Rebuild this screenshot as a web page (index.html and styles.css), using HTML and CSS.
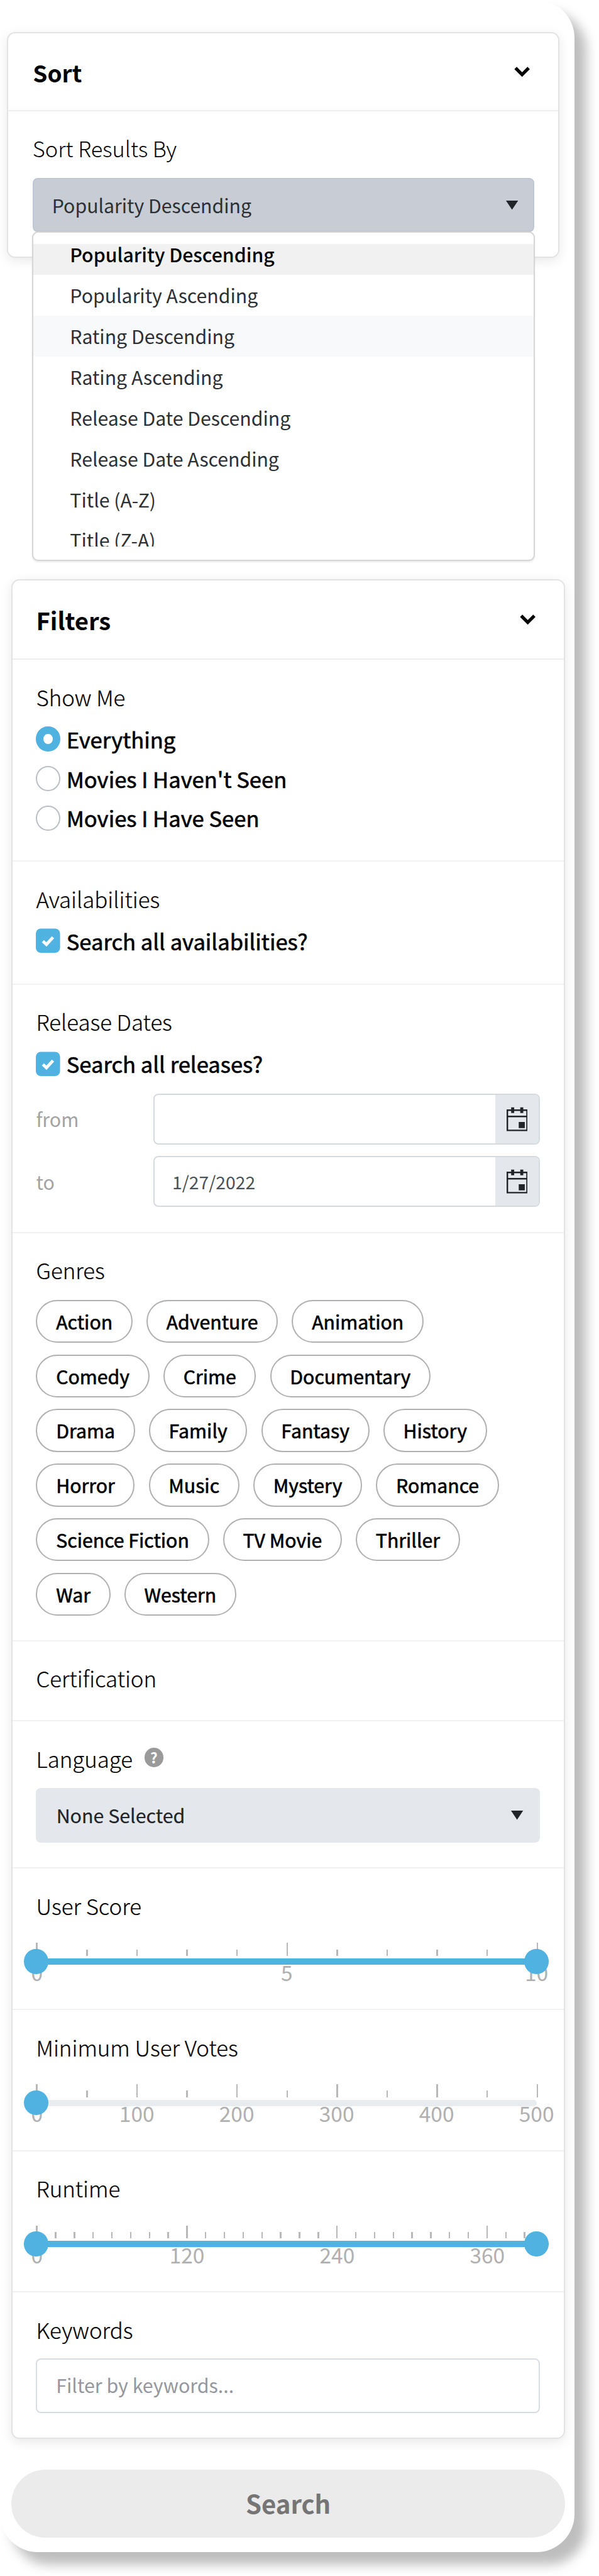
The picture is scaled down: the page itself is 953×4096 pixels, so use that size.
FILE: index.html
```html
<!DOCTYPE html>
<html lang="en">
<head>
<meta charset="utf-8">
<title>Sort and Filters</title>
<link rel="stylesheet" href="styles.css">
</head>
<body>
<main class="panel">
  <section class="card sort-card">
    <header class="card-header">
      <h2 class="sort-title">Sort</h2>
      <svg class="chevron" viewBox="0 0 34 22"><path d="M4 4 L17 17 L30 4"/></svg>
    </header>
    <div class="sort-body">
      <h3>Sort Results By</h3>
      <div class="select select-open">
        <span>Popularity Descending</span>
        <svg class="arrow" viewBox="0 0 24 18"><path d="M0 0H24L12 18Z"/></svg>
        <div class="dropdown">
          <ul class="options">
            <li class="selected">Popularity Descending</li>
            <li>Popularity Ascending</li>
            <li class="hover">Rating Descending</li>
            <li>Rating Ascending</li>
            <li>Release Date Descending</li>
            <li>Release Date Ascending</li>
            <li>Title (A-Z)</li>
            <li>Title (Z-A)</li>
          </ul>
        </div>
      </div>
    </div>
  </section>

  <section class="card filter-card">
    <header class="card-header">
      <h2>Filters</h2>
      <svg class="chevron" viewBox="0 0 34 22"><path d="M4 4 L17 17 L30 4"/></svg>
    </header>

    <div class="group show-me">
      <h3>Show Me</h3>
      <div class="checks">
        <label><i class="radio on"></i>Everything</label>
        <label><i class="radio"></i>Movies I Haven't Seen</label>
        <label><i class="radio"></i>Movies I Have Seen</label>
      </div>
    </div>

    <div class="group availabilities">
      <h3>Availabilities</h3>
      <div class="checks">
        <label><svg class="checkbox" viewBox="0 0 48 48"><rect width="48" height="48" rx="10"/><path d="M14 25 L21 31.500 L34 17.500"/></svg>Search all availabilities?</label>
      </div>
    </div>

    <div class="group releases">
      <h3>Release Dates</h3>
      <div class="checks">
        <label><svg class="checkbox" viewBox="0 0 48 48"><rect width="48" height="48" rx="10"/><path d="M14 25 L21 31.500 L34 17.500"/></svg>Search all releases?</label>
      </div>
      <div class="dates">
        <div class="date-row">
          <span class="date-label">from</span>
          <div class="date-input"><span class="date-value"></span><span class="date-button"><svg class="calendar" viewBox="0 0 42 48"><path class="line" d="M1.500 6.500H40.500V46.500H1.500ZM1.500 19H40.500"/><path d="M9 1H15V12H9ZM27 1H33V12H27ZM24 30H36V42H24Z"/></svg></span></div>
        </div>
        <div class="date-row">
          <span class="date-label">to</span>
          <div class="date-input"><span class="date-value">1/27/2022</span><span class="date-button"><svg class="calendar" viewBox="0 0 42 48"><path class="line" d="M1.500 6.500H40.500V46.500H1.500ZM1.500 19H40.500"/><path d="M9 1H15V12H9ZM27 1H33V12H27ZM24 30H36V42H24Z"/></svg></span></div>
        </div>
      </div>
    </div>

    <div class="group genres">
      <h3>Genres</h3>
      <ul class="pills">
        <li>Action</li><li>Adventure</li><li>Animation</li>
        <li>Comedy</li><li>Crime</li><li>Documentary</li>
        <li>Drama</li><li>Family</li><li>Fantasy</li><li>History</li>
        <li>Horror</li><li>Music</li><li>Mystery</li><li>Romance</li>
        <li>Science Fiction</li><li>TV Movie</li><li>Thriller</li>
        <li>War</li><li>Western</li>
      </ul>
    </div>

    <div class="group certification">
      <h3>Certification</h3>
    </div>

    <div class="group language">
      <h3>Language <span class="help">?</span></h3>
      <div class="select">
        <span>None Selected</span>
        <svg class="arrow" viewBox="0 0 24 18"><path d="M0 0H24L12 18Z"/></svg>
      </div>
    </div>

    <div class="group score">
      <h3>User Score</h3>
      <div class="slider">
        <div class="ticks"><i class="big"></i><i></i><i></i><i></i><i></i><i class="big"></i><i></i><i></i><i></i><i></i><i class="big"></i></div>
        <div class="track filled"><b class="handle"></b><b class="handle"></b></div>
        <div class="labels"><span>0</span><span>5</span><span>10</span></div>
      </div>
    </div>

    <div class="group votes">
      <h3>Minimum User Votes</h3>
      <div class="slider">
        <div class="ticks"><i class="big"></i><i></i><i class="big"></i><i></i><i class="big"></i><i></i><i class="big"></i><i></i><i class="big"></i><i></i><i class="big"></i></div>
        <div class="track"><b class="handle"></b></div>
        <div class="labels"><span>0</span><span>100</span><span>200</span><span>300</span><span>400</span><span>500</span></div>
      </div>
    </div>

    <div class="group runtime">
      <h3>Runtime</h3>
      <div class="slider">
        <div class="ticks"><i class="big"></i><i></i><i></i><i></i><i></i><i></i><i></i><i></i><i class="big"></i><i></i><i></i><i></i><i></i><i></i><i></i><i></i><i class="big"></i><i></i><i></i><i></i><i></i><i></i><i></i><i></i><i class="big"></i><i></i><i></i></div>
        <div class="track filled"><b class="handle"></b><b class="handle"></b></div>
        <div class="labels"><span>0</span><span>120</span><span>240</span><span>360</span></div>
      </div>
    </div>

    <div class="group keywords">
      <h3>Keywords</h3>
      <div class="text-input">Filter by keywords...</div>
    </div>
  </section>

  <div class="search-button">Search</div>
</main>
</body>
</html>
```
FILE: styles.css
```css
html {
  font-size: 8.042px;
}

* {
  box-sizing: border-box;
  margin: 0;
  padding: 0;
}

body {
  height: 509.3rem;
  overflow: hidden;
  background: #fff;
  color: #000;
  font-family: "Noto Sans CJK SC", "Noto Sans", sans-serif;
  font-size: 3.78rem;
}

ul {
  list-style: none;
}

.panel {
  width: 113.66rem;
  height: 504.54rem;
  padding-top: 6.3rem;
  border-radius: 7.5rem;
  background: #fff;
  box-shadow: 2.3rem 2.4rem 2.2rem rgba(0, 0, 0, 0.26);
}

/* Cards */
.card {
  border: 0.3rem solid #e3e3e3;
  border-radius: 1.6rem;
  background: #fff;
  box-shadow: 0 0.6rem 2.2rem rgba(0, 0, 0, 0.09);
}

.sort-card {
  width: 109.3rem;
  height: 44.7rem;
  margin-left: 1.36rem;
}

.filter-card {
  width: 109.65rem;
  height: 367.73rem;
  margin: 63.53rem 0 0 2.2rem;
}

.card-header {
  display: flex;
  align-items: center;
  justify-content: space-between;
  height: 15.5rem;
  padding: 0 5.4rem 0 4.9rem;
  border-bottom: 0.35rem solid #eee;
}

.filter-card .card-header {
  height: 15.67rem;
  padding: 0 5.5rem 0 4.7rem;
}

h2 {
  padding-top: 0.2rem;
  font-size: 4.75rem;
  font-weight: 700;
  line-height: 6rem;
}

h2.sort-title {
  font-size: 4.6rem;
}

h3 {
  display: flex;
  height: 5rem;
  font-size: 4.33rem;
  font-weight: 300;
  line-height: 5.2rem;
  white-space: nowrap;
}

.filter-card h3 {
  -webkit-text-stroke: 0.03rem #000;
}

.chevron {
  width: 3.4rem;
  height: 2.2rem;
  fill: none;
  stroke: #000;
  stroke-width: 6.5;
}

/* Select boxes */
.sort-body {
  padding: 4.7rem 4.7rem 0 4.84rem;
}

.sort-body h3 {
  margin-bottom: 3.5rem;
  font-size: 4.27rem;
}

.select {
  position: relative;
  display: flex;
  align-items: center;
  justify-content: space-between;
  height: 10.77rem;
  padding: 0 3.3rem 0.1rem 4rem;
  border-radius: 1rem;
  background: #e4e7eb;
  color: #212529;
}

.language .select {
  margin-top: 3.38rem;
  -webkit-text-stroke: 0.03rem #212529;
}

.select-open {
  height: 10.6rem;
  padding: 0 3rem 0 3.6rem;
  border: 0.3rem solid #bfc6d3;
  background: #c8ccd4;
  color: #2c3034;
  font-size: 3.76rem;
}

.arrow {
  width: 2.4rem;
  height: 1.8rem;
  fill: #212529;
}

.dropdown {
  position: absolute;
  top: 10.3rem;
  right: -0.3rem;
  left: -0.3rem;
  height: 65.1rem;
  padding: 2.2rem 0;
  border: 0.3rem solid #d6d6d6;
  border-radius: 1.2rem;
  background: #fff;
  box-shadow: 0 0.2rem 0.3rem rgba(0, 0, 0, 0.08);
}

.options {
  height: 59.8rem;
  overflow: hidden;
}

.options li {
  height: 8.065rem;
  padding-left: 7.2rem;
  line-height: 8.065rem;
}

.options .selected {
  margin-top: -1.93rem;
  background: #f1f1f1;
  color: #000;
  font-weight: 500;
}

.options .hover {
  background: #f8f9fb;
}

/* Filter groups */
.group {
  padding: 4.8rem 4.75rem 0 4.7rem;
  border-bottom: 0.35rem solid #f1f1f1;
}

.show-me { height: 39.9rem; }
.availabilities { height: 24.35rem; }
.releases { height: 49.1rem; }
.genres { height: 80.7rem; }
.certification { height: 15.9rem; }
.language { height: 29.1rem; }
.score, .votes, .runtime { height: 27.92rem; }
.keywords { border-bottom: 0; }

.checks {
  margin-top: 1.97rem;
}

.checks label {
  display: flex;
  align-items: center;
  gap: 1.2rem;
  height: 7.82rem;
  font-size: 4.3rem;
  line-height: 7.82rem;
  -webkit-text-stroke: 0.08rem #000;
}

.radio {
  width: 4.8rem;
  height: 4.9rem;
  border: 0.3rem solid #b9bfc5;
  border-radius: 50%;
}

.radio.on {
  border: 1.5rem solid #4fb2e0;
}

.checkbox {
  width: 4.8rem;
  height: 4.9rem;
  fill: #4fb2e0;
}

.checkbox path {
  fill: none;
  stroke: #fff;
  stroke-width: 6;
}

.dates {
  display: grid;
  gap: 2.25rem;
  margin-top: 1.91rem;
}

.date-row {
  display: flex;
  align-items: center;
  height: 10.1rem;
}

.date-label {
  width: 23.18rem;
  color: #a3a3a3;
}

.date-input {
  display: flex;
  flex: 1;
  align-items: center;
  justify-content: space-between;
  height: 10.1rem;
  overflow: hidden;
  border: 0.3rem solid #d5dae0;
  border-radius: 1rem;
}

.date-value {
  padding-left: 3.5rem;
  color: #495057;
  font-size: 3.52rem;
}

.date-button {
  display: flex;
  align-items: center;
  justify-content: center;
  width: 8.65rem;
  height: 100%;
  background: #e4e7eb;
}

.calendar {
  width: 4.2rem;
  height: 4.8rem;
  fill: #212529;
}

.calendar .line {
  fill: none;
  stroke: #212529;
  stroke-width: 3;
}

.pills {
  display: flex;
  flex-wrap: wrap;
  gap: 2.3rem 2.75rem;
  width: 98rem;
  margin-top: 3.4rem;
}

.pills li {
  height: 8.5rem;
  padding: 0 3.7rem;
  border: 0.3rem solid #b0b0b0;
  border-radius: 4.25rem;
  font-size: 3.76rem;
  line-height: 8.1rem;
  -webkit-text-stroke: 0.08rem #000;
}

.help {
  width: 3.8rem;
  height: 3.8rem;
  margin: 0.4rem 0 0 2.3rem;
  border-radius: 50%;
  background: #9a9a9a;
  color: #fff;
  font-size: 2.9rem;
  font-weight: 700;
  line-height: 3.8rem;
  text-align: center;
  -webkit-text-stroke: 0;
}

/* Sliders */
.slider {
  width: 99rem;
  margin-top: 4.88rem;
}

.ticks {
  display: flex;
  align-items: flex-end;
  justify-content: space-between;
  width: 99.3rem;
  height: 2.6rem;
}

.ticks i {
  width: 0.3rem;
  height: 1.3rem;
  background: #b8b8b8;
}

.ticks .big {
  height: 2.6rem;
}

.runtime .ticks {
  width: 96.8rem;
}

.track {
  position: relative;
  z-index: 1;
  display: flex;
  align-items: center;
  justify-content: space-between;
  height: 1.25rem;
  margin-top: 0.45rem;
  border-radius: 0.6rem;
  background: #e9ecef;
}

.track.filled {
  background: #4fb2e0;
}

.handle {
  flex: none;
  width: 4.8rem;
  height: 4.9rem;
  margin: 0 -2.4rem;
  border-radius: 50%;
  background: #4fb2e0;
}

.labels {
  display: flex;
  justify-content: space-between;
  height: 4rem;
  margin: -0.55rem 0 0 0.15rem;
  color: #b0b0b0;
  font-size: 4.16rem;
  line-height: 4rem;
}

.labels span {
  display: flex;
  justify-content: center;
  width: 0;
}

.runtime .labels {
  width: 90%;
}

.text-input {
  height: 10.77rem;
  margin-top: 3.3rem;
  padding-left: 3.7rem;
  border: 0.3rem solid #d8dde3;
  border-radius: 1rem;
  color: #94989d;
  line-height: 10.1rem;
}

.search-button {
  width: 109.65rem;
  height: 13.4rem;
  margin: 6.04rem 0 0 2.2rem;
  border-radius: 6.7rem;
  background: #ebebeb;
  color: #757575;
  font-size: 4.99rem;
  font-weight: 700;
  line-height: 13.2rem;
  text-align: center;
}
```
